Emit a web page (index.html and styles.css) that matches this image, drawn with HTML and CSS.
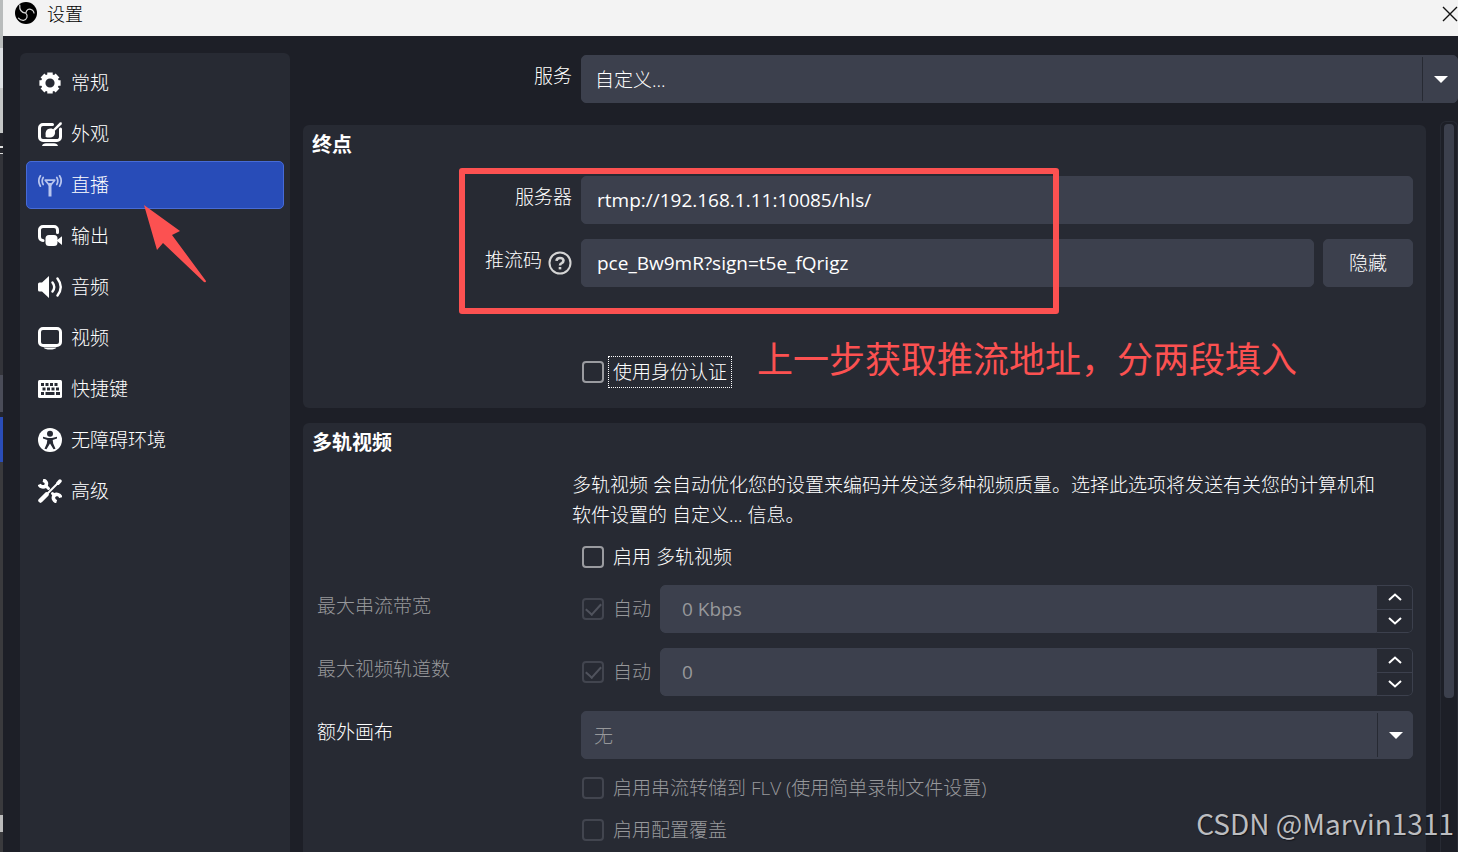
FILE: index.html
```html
<!DOCTYPE html>
<html lang="zh-CN">
<head>
<meta charset="utf-8">
<title>设置</title>
<link rel="stylesheet" href="styles.css">
</head>
<body>
<div class="edge" aria-hidden="true"></div>
<div class="window">
  <header class="titlebar">
    <svg class="logo" viewBox="0 0 22 22"><circle cx="11" cy="11" r="11" fill="#000"/><g fill="none" stroke="#d6d6d6" stroke-width="1.200" stroke-linecap="round"><path d="M4.800 3.200C4.300 7.500 6.500 10.500 10.800 11.200M10.800 11.200C11.500 7.500 13.500 6 17.500 8.200Q18.800 9.200 19 11M10.800 11.200C13.200 13.600 12.200 17.500 8.500 18.300Q5.500 18.500 3.500 16.200"/></g></svg>
    <h1 class="title">设置</h1>
    <button class="close" aria-label="关闭"><svg viewBox="0 0 16 16"><path d="M1 1L15 15M15 1L1 15" stroke="#111" stroke-width="1.400" fill="none"/></svg></button>
  </header>
  <div class="body">
    <nav class="sidebar">
      <a class="item" href="#general"><svg class="icon" viewBox="0 0 24 24"><circle cx="12" cy="12" r="6.800" fill="none" stroke="#fff" stroke-width="4.400"/><g stroke="#fff" stroke-width="5.400"><path d="M12 1.400v3.500M12 19.100v3.500M1.400 12h3.500M19.100 12h3.500M4.500 4.500l2.500 2.500M17 17l2.500 2.500M4.500 19.500l2.500-2.500M17 7l2.500-2.500"/></g></svg>常规</a>
      <a class="item" href="#appearance"><svg class="icon" viewBox="0 0 24 24"><path fill="none" stroke="#fff" stroke-width="3" stroke-linecap="round" d="M14.500 2.500H5A3.500 3.500 0 0 0 1.500 6v9A3.500 3.500 0 0 0 5 18.500h14a3.500 3.500 0 0 0 3.500-3.500V7"/><path fill="#fff" d="M7.500 14.800c.5-1-.2-2 .1-4a5 5 0 0 1 6-4.300l1.600.8L22 .2l1.800.2v1.800l-6.900 6.600.2 2.200c-.3 3-2.800 4.600-5 4.600-2 0-3.500 0-4.600-.8zM4 24c.4-2 2-2.800 4-2.800h8c2 0 3.600.8 4 2.800z"/></svg>外观</a>
      <a class="item item-active" href="#stream" aria-current="page"><svg class="icon" viewBox="0 0 24 24"><g fill="none" stroke="#b8c5ee" stroke-linecap="round"><path stroke-width="3" stroke-linecap="butt" d="M12 10v13.500"/><path stroke-width="1.800" stroke-linejoin="round" d="M7.300 7.200h9.400L12 13z"/><path stroke-width="1.700" d="M5.200 4.500a7 7 0 0 0 0 7M18.800 4.500a7 7 0 0 1 0 7M2.400 2.800a10 10 0 0 0 0 10.400M21.600 2.800a10 10 0 0 1 0 10.400"/></g></svg>直播</a>
      <a class="item" href="#output"><svg class="icon" viewBox="0 0 24 24"><path fill="none" stroke="#fff" stroke-width="3" stroke-linecap="round" d="M5 16.500A3.500 3.500 0 0 1 1.500 13V6A3.500 3.500 0 0 1 5 2.500h11A3.500 3.500 0 0 1 19.500 6v2.500"/><rect x="7.500" y="11" width="12" height="11" rx="3.500" fill="#fff"/><path fill="#fff" d="M18.500 16.500L24 12.300v8.600z"/></svg>输出</a>
      <a class="item" href="#audio"><svg class="icon" viewBox="0 0 24 24"><path fill="#fff" d="M0 9q0-1.500 1.500-1.500H4L11 1v22l-7-6.500H1.500Q0 16.500 0 15z"/><path fill="none" stroke="#fff" stroke-width="2.400" stroke-linecap="round" d="M14.500 7.500Q18 12 14.500 16.500M19.500 3.500Q26 12 19.500 20.500"/></svg>音频</a>
      <a class="item" href="#video"><svg class="icon" viewBox="0 0 24 24"><rect x="1.500" y="2.500" width="21" height="17" rx="3.500" fill="none" stroke="#fff" stroke-width="3"/><path fill="#fff" d="M5.500 21.500h13q-1.500 2-6.500 2t-6.500-2z"/></svg>视频</a>
      <a class="item" href="#hotkeys"><svg class="icon" viewBox="0 0 24 24"><rect y="3" width="24" height="18" rx="1.500" fill="#fff"/><path stroke="#272a33" stroke-width="3" fill="none" d="M3 7.500h3m1.500 0h3m1.500 0h3m1.500 0h3M4.500 12h3m1.500 0h3m1.500 0h3m1.500 0h3M3 16.500h3m1.500 0h9m1.500 0h4"/></svg>快捷键</a>
      <a class="item" href="#accessibility"><svg class="icon" viewBox="0 0 24 24"><circle cx="12" cy="12" r="12" fill="#fff"/><circle cx="12" cy="5.800" r="3" fill="#272a33"/><path fill="#272a33" d="M5 8.800l5 1.100h4l5-1.100v1.800l-4.300 1.400.5 3.500 2.300 5.300-2 .5L12 15.500l-3.500 5.800-2-.5 2.300-5.300.5-3.500L5 10.600z"/></svg>无障碍环境</a>
      <a class="item" href="#advanced"><svg class="icon" viewBox="0 0 24 24"><g fill="none" stroke="#fff" stroke-linecap="round"><path stroke-width="4.500" d="M2.500 21.500L8.500 15.500"/><path stroke-width="2" d="M8 16L20 4"/><path stroke-width="3.500" d="M20 4.200L22 2"/><path stroke-width="3.600" stroke-linecap="butt" d="M5 1.200C8 1.800 9.300 4.200 7.800 6.800 5.500 8.700 2.500 8 1.300 5.500"/><path stroke-width="3" d="M8 7L10.500 9.500"/><path stroke-width="3.600" stroke-linecap="butt" d="M22.800 18.500C22 15.500 18.500 14.500 16.200 16.200 14.300 19 16 22 18.600 22.700"/><path stroke-width="3" d="M14.500 14.500L16.500 16.500"/></g></svg>高级</a>
    </nav>
    <main class="main">
      <div class="row service">
        <label class="label label-right" for="service">服务</label>
        <div class="select"><select id="service"><option>自定义...</option></select></div>
      </div>
      <div class="scroll">
        <div class="groups">
          <section class="group">
            <h2 class="heading">终点</h2>
            <div class="fields destination">
              <div class="row">
                <label class="label label-right" for="server">服务器</label>
                <input class="text" id="server" type="text" value="rtmp://192.168.1.11:10085/hls/">
              </div>
              <div class="row">
                <div class="label label-right key-label"><label for="key">推流码</label><svg class="help" viewBox="0 0 24 24"><circle cx="12" cy="12" r="10.500" fill="none" stroke="#d4d4d4" stroke-width="2"/><path fill="none" stroke="#d4d4d4" stroke-width="2.600" d="M8.500 9.800Q8.700 7 12 7t3.500 2.600q0 1.600-1.800 2.500Q12 12.900 12 14.400"/><path stroke="#d4d4d4" stroke-width="2.600" d="M12 16v2.400"/></svg></div>
                <div class="pair">
                  <input class="text" id="key" type="text" value="pce_Bw9mR?sign=t5e_fQrigz">
                  <button class="button">隐藏</button>
                </div>
              </div>
            </div>
            <div class="row auth"><span></span><label class="check focused"><input type="checkbox"><span>使用身份认证</span></label></div>
          </section>
          <section class="group group-tall">
            <h2 class="heading">多轨视频</h2>
            <p class="note">多轨视频 会自动优化您的设置来编码并发送多种视频质量。选择此选项将发送有关您的计算机和<br>软件设置的 自定义... 信息。</p>
            <div class="row enable"><span></span><label class="check"><input type="checkbox"><span>启用 多轨视频</span></label></div>
            <div class="fields">
              <div class="row">
                <label class="label dim" for="rate">最大串流带宽</label>
                <div class="auto">
                  <label class="check dim"><input type="checkbox" checked disabled><span>自动</span></label>
                  <div class="spin"><input class="text" id="rate" type="text" value="0 Kbps" disabled><div class="steps"><button aria-label="增加"><svg viewBox="0 0 14 8"><path d="M1 7l6-5.500L13 7"/></svg></button><button aria-label="减少"><svg viewBox="0 0 14 8"><path d="M1 1l6 5.500L13 1"/></svg></button></div></div>
                </div>
              </div>
              <div class="row">
                <label class="label dim" for="tracks">最大视频轨道数</label>
                <div class="auto">
                  <label class="check dim"><input type="checkbox" checked disabled><span>自动</span></label>
                  <div class="spin"><input class="text" id="tracks" type="text" value="0" disabled><div class="steps"><button aria-label="增加"><svg viewBox="0 0 14 8"><path d="M1 7l6-5.500L13 7"/></svg></button><button aria-label="减少"><svg viewBox="0 0 14 8"><path d="M1 1l6 5.500L13 1"/></svg></button></div></div>
                </div>
              </div>
              <div class="row">
                <label class="label" for="canvas">额外画布</label>
                <div class="select"><select id="canvas" disabled><option>无</option></select></div>
              </div>
            </div>
            <div class="options">
              <div class="row"><span></span><label class="check dim"><input type="checkbox" disabled><span>启用串流转储到 FLV (使用简单录制文件设置)</span></label></div>
              <div class="row"><span></span><label class="check dim"><input type="checkbox" disabled><span>启用配置覆盖</span></label></div>
            </div>
          </section>
        </div>
        <div class="scrollbar"><div class="thumb"></div></div>
      </div>
    </main>
  </div>
</div>
<div class="mark-box"></div>
<svg class="mark-arrow" viewBox="0 0 64 80"><path fill="#fc5151" d="M1 1L37 27 29 31 63 77Q63 79 61 78L20 39 14 46Z"/></svg>
<p class="mark-text">上一步获取推流地址，分两段填入</p>
<p class="watermark">CSDN @Marvin1311</p>
</body>
</html>
```
FILE: styles.css
```css
* { box-sizing: border-box; }

body {
  margin: 0;
  height: 100vh;
  display: flex;
  overflow: hidden;
  position: relative;
  background: #1d1f27;
  color: #fff;
  font: 300 19px/30px "Open Sans", "Noto Sans CJK SC", sans-serif;
}

h1, h2, p { margin: 0; }
input, select, button { font: inherit; color: inherit; margin: 0; }
input { font-weight: 400; }

.edge {
  flex: none;
  width: 3px;
  background: linear-gradient(#b9bcbc 0 48px, #dcdfe2 48px 88px, #c4c6c6 88px 133px, #23242b 133px 146px, #ddd 146px 148px, #23242b 148px 153px, #ddd 153px 154px, #33343a 154px 375px, #4a4c58 375px 412px, #23242b 412px 417px, #2a4db8 417px 462px, #3a3a3d 462px 815px, #bbb 815px 832px, #3a3a3d 832px);
}
.window { flex: 1; min-width: 0; display: flex; flex-direction: column; }

.titlebar {
  flex: none;
  height: 36px;
  display: flex;
  align-items: flex-start;
  padding-left: 12px;
  background: #f3f3f3;
  color: #000;
}
.logo { width: 22px; height: 22px; margin: 2px 10px 0 0; }
.title { flex: 1; font-size: 18px; font-weight: 300; line-height: 28px; }
.close { width: 16px; height: 28px; padding: 0; border: 0; background: none; display: flex; align-items: center; }
.close svg { width: 16px; height: 16px; }

.body { flex: 1; min-height: 0; display: flex; gap: 13px; padding: 17px 0 0 17px; }
.sidebar {
  flex: none;
  width: 270px;
  padding: 6px;
  display: flex;
  flex-direction: column;
  gap: 3px;
  border-radius: 6px 6px 0 0;
  background: #272a33;
}
.item {
  height: 48px;
  display: flex;
  align-items: center;
  gap: 9px;
  padding-left: 11px;
  border: 1px solid transparent;
  border-radius: 5px;
  color: #fff;
  text-decoration: none;
}
.item-active { background: #284cb8; border-color: #476bd7; }
.icon { width: 24px; height: 24px; }

.main { flex: 1; min-width: 0; display: flex; flex-direction: column; padding-top: 2px; }
.row { display: grid; grid-template-columns: 269px minmax(0, 1fr); gap: 9px; }
.label { line-height: 42px; padding-left: 14px; }
.label-right { text-align: right; }
.key-label { display: flex; justify-content: flex-end; gap: 6px; }
.help { width: 24px; height: 24px; margin-top: 12px; }
.dim { color: #97989b; }

.text, .select select, .button {
  width: 100%;
  height: 48px;
  border: 1px solid #3c404d;
  border-radius: 5px;
  background: #3c404d;
  padding: 0 15px;
}
.text:disabled, .select select:disabled { color: #97989b; opacity: 1; }
.select { position: relative; }
.select select { appearance: none; display: block; padding: 2px 13px 0; }
.select select:disabled { padding: 2px 12px 0; }
.select::before {
  content: "";
  position: absolute;
  right: 35px;
  top: 2px;
  bottom: 2px;
  width: 1px;
  background: #272a33;
}
.select::after {
  content: "";
  position: absolute;
  right: 10px;
  top: 21px;
  border: 7px solid transparent;
  border-top-color: #fff;
  border-bottom-width: 0;
}
.pair { display: grid; grid-template-columns: minmax(0, 1fr) 90px; gap: 9px; }

.scroll { flex: 1; min-height: 0; display: flex; gap: 14px; padding-top: 18px; overflow: hidden; }
.groups { flex: 1; min-width: 0; display: flex; flex-direction: column; gap: 15px; padding-top: 4px; }
.group { flex: none; padding: 0 13px 20px 0; border-radius: 6px; background: #272a33; }
.group-tall { padding-bottom: 40px; }
.heading { padding-left: 9px; font-size: 20px; font-weight: 700; line-height: 40px; }
.fields { display: flex; flex-direction: column; gap: 15px; }
.destination { padding-top: 11px; }
.auth { padding-top: 69px; }
.note { padding: 7px 0 11px 269px; }
.enable { padding-bottom: 12px; }
.options { display: flex; flex-direction: column; gap: 10px; padding-top: 13px; }

.check { display: flex; align-items: center; gap: 4px; padding-left: 1px; justify-self: start; }
.check span { border: 1px solid transparent; padding: 0 4px; white-space: nowrap; }
.focused span { border: 1px dotted #fff; }
.check input {
  appearance: none;
  flex: none;
  width: 22px;
  height: 22px;
  border: 2px solid #9a9ba0;
  border-radius: 4px;
  position: relative;
}
.check input:disabled { border-color: #42454f; }
.check input:checked::after {
  content: "";
  position: absolute;
  left: 5px;
  top: 0;
  width: 7px;
  height: 13px;
  border: solid #50535d;
  border-width: 0 2px 2px 0;
  transform: rotate(42deg);
}

.auto { display: grid; grid-template-columns: 70px minmax(0, 1fr); gap: 9px; }
.spin { display: grid; grid-template-columns: minmax(0, 1fr) 36px; height: 48px; border-radius: 5px; overflow: hidden; }
.spin .text { border-radius: 5px 0 0 5px; padding-left: 21px; }
.steps { display: grid; grid-template-rows: 1fr 1fr; gap: 1px; padding: 1px 1px 1px 0; background: #3c404d; border-radius: 0 5px 5px 0; }
.steps button { padding: 0; border: 0; background: #272a33; display: flex; align-items: center; justify-content: center; }
.steps button:first-child { border-top-right-radius: 4px; }
.steps button:last-child { border-bottom-right-radius: 4px; }
.steps svg { width: 14px; height: 8px; fill: none; stroke: #fff; stroke-width: 2; }

.scrollbar { flex: none; width: 18px; padding: 2px 3px; border: 1px solid #272a33; border-bottom: 0; border-radius: 6px 6px 0 0; }
.thumb { height: 79%; border-radius: 4px; background: #3c404d; }

.mark-box { position: absolute; left: 459px; top: 168px; width: 600px; height: 146px; border: 6px solid #fc5151; border-radius: 3px; }
.mark-arrow { position: absolute; left: 143px; top: 204px; width: 64px; height: 80px; }
.mark-text { position: absolute; left: 757px; top: 332px; font: 400 36px/50px "Noto Sans CJK SC", sans-serif; color: #fc5151; white-space: nowrap; }
.watermark { position: absolute; right: 4px; bottom: 11px; font: 400 28px/36px "Noto Sans CJK SC", sans-serif; color: #bcbdc0; text-shadow: 1px 1px 1px #15161b; white-space: nowrap; }
```
